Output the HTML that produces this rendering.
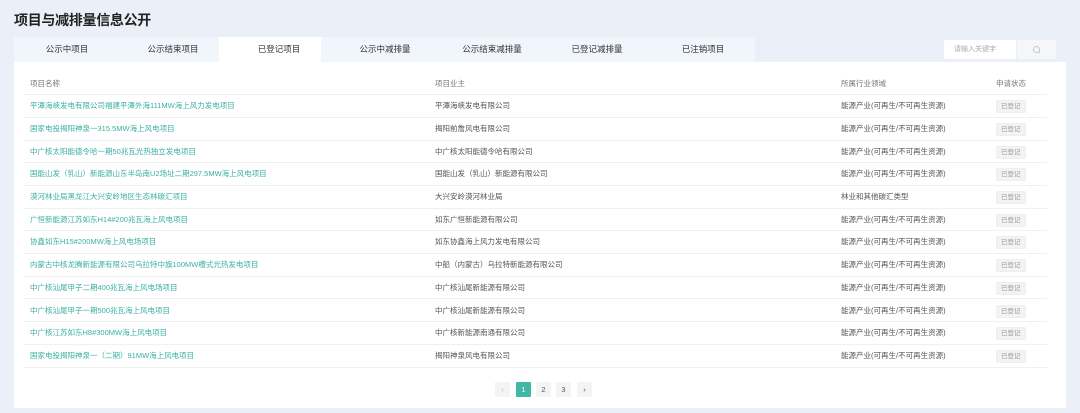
<!DOCTYPE html>
<html><head><meta charset="utf-8"><style>
*{margin:0;padding:0;box-sizing:border-box}
body{width:1080px;height:413px;background:#ebeff7;font-family:"Liberation Sans","Noto Sans CJK SC",sans-serif;position:relative;overflow:hidden;color:#555}
.title{position:absolute;left:14px;top:10px;font-size:14px;font-weight:bold;color:#222;letter-spacing:-0.3px}
.tabs{position:absolute;left:14px;top:37px;width:741px;height:25px;background:#f1f5fc}
.tab{position:absolute;top:0;height:25px;line-height:25px;font-size:8.5px;color:#333;transform:translateX(-50%);white-space:nowrap}
.act{position:absolute;left:205px;top:0;width:102px;height:25px;background:#fff}
.search{position:absolute;left:944px;top:40px;width:112px;height:19px;background:#fff;border-radius:2px}
.search span{position:absolute;left:10px;top:0;line-height:19px;font-size:7px;color:#aaa}
.search .btn{position:absolute;left:72px;top:0;width:40px;height:19px;background:#f4f6f9;border-left:1px solid #eee}
.panel{position:absolute;left:14px;top:62px;width:1052px;height:346px;background:#fff}
.row{position:absolute;left:10px;width:1023px;height:22.7px;border-bottom:1px solid #eef0f3;font-size:7.5px;line-height:22.7px;white-space:nowrap}
.row div{position:absolute;top:0}
.c1{left:6px;color:#3ab0a0}.c2{left:411px;color:#555}.c3{left:817px;color:#555}.c4{left:972px}
.hd div{color:#777}.hd .c1{color:#777}
.badge{display:inline-block;background:#f2f3f5;color:#999;font-size:6.5px;line-height:11px;padding:0 4px;border-radius:2px;border:1px solid #eceef0}
.pg{position:absolute;top:382px;width:15px;height:15px;background:#f3f4f6;font-size:7.5px;line-height:15px;text-align:center;color:#555;border-radius:1px}
.pg.on{background:#40b8a8;color:#fff}
</style></head><body>
<div class="title">项目与减排量信息公开</div>
<div class="tabs">
<div class="act"></div>
<div class="tab" style="left:53px">公示中项目</div>
<div class="tab" style="left:159px">公示结束项目</div>
<div class="tab" style="left:265px">已登记项目</div>
<div class="tab" style="left:371px">公示中减排量</div>
<div class="tab" style="left:478px">公示结束减排量</div>
<div class="tab" style="left:583px">已登记减排量</div>
<div class="tab" style="left:689px">已注销项目</div>
</div>
<div class="search"><span>请输入关键字</span><div class="btn"><svg width="40" height="19"><circle cx="19.5" cy="9.5" r="3" fill="none" stroke="#bbb" stroke-width="0.8"/><line x1="21.7" y1="11.7" x2="23" y2="13" stroke="#bbb" stroke-width="0.8"/></svg></div></div>
<div class="panel">
<div class="row hd" style="top:10.5px"><div class="c1">项目名称</div><div class="c2">项目业主</div><div class="c3">所属行业领域</div><div class="c4">申请状态</div></div>
<div class="row" style="top:33.2px"><div class="c1">平潭海峡发电有限公司福建平潭外海111MW海上风力发电项目</div><div class="c2">平潭海峡发电有限公司</div><div class="c3">能源产业(可再生/不可再生资源)</div><div class="c4"><span class="badge">已登记</span></div></div>
<div class="row" style="top:55.9px"><div class="c1">国家电投揭阳神泉一315.5MW海上风电项目</div><div class="c2">揭阳前詹风电有限公司</div><div class="c3">能源产业(可再生/不可再生资源)</div><div class="c4"><span class="badge">已登记</span></div></div>
<div class="row" style="top:78.6px"><div class="c1">中广核太阳能德令哈一期50兆瓦光热独立发电项目</div><div class="c2">中广核太阳能德令哈有限公司</div><div class="c3">能源产业(可再生/不可再生资源)</div><div class="c4"><span class="badge">已登记</span></div></div>
<div class="row" style="top:101.3px"><div class="c1">国能山发（乳山）新能源山东半岛南U2场址二期297.5MW海上风电项目</div><div class="c2">国能山发（乳山）新能源有限公司</div><div class="c3">能源产业(可再生/不可再生资源)</div><div class="c4"><span class="badge">已登记</span></div></div>
<div class="row" style="top:124px"><div class="c1">漠河林业局黑龙江大兴安岭地区生态林碳汇项目</div><div class="c2">大兴安岭漠河林业局</div><div class="c3">林业和其他碳汇类型</div><div class="c4"><span class="badge">已登记</span></div></div>
<div class="row" style="top:146.7px"><div class="c1">广恒新能源江苏如东H14#200兆瓦海上风电项目</div><div class="c2">如东广恒新能源有限公司</div><div class="c3">能源产业(可再生/不可再生资源)</div><div class="c4"><span class="badge">已登记</span></div></div>
<div class="row" style="top:169.4px"><div class="c1">协鑫如东H15#200MW海上风电场项目</div><div class="c2">如东协鑫海上风力发电有限公司</div><div class="c3">能源产业(可再生/不可再生资源)</div><div class="c4"><span class="badge">已登记</span></div></div>
<div class="row" style="top:192.1px"><div class="c1">内蒙古中核龙腾新能源有限公司乌拉特中旗100MW槽式光热发电项目</div><div class="c2">中船（内蒙古）乌拉特新能源有限公司</div><div class="c3">能源产业(可再生/不可再生资源)</div><div class="c4"><span class="badge">已登记</span></div></div>
<div class="row" style="top:214.8px"><div class="c1">中广核汕尾甲子二期400兆瓦海上风电场项目</div><div class="c2">中广核汕尾新能源有限公司</div><div class="c3">能源产业(可再生/不可再生资源)</div><div class="c4"><span class="badge">已登记</span></div></div>
<div class="row" style="top:237.5px"><div class="c1">中广核汕尾甲子一期500兆瓦海上风电项目</div><div class="c2">中广核汕尾新能源有限公司</div><div class="c3">能源产业(可再生/不可再生资源)</div><div class="c4"><span class="badge">已登记</span></div></div>
<div class="row" style="top:260.2px"><div class="c1">中广核江苏如东H8#300MW海上风电项目</div><div class="c2">中广核新能源南通有限公司</div><div class="c3">能源产业(可再生/不可再生资源)</div><div class="c4"><span class="badge">已登记</span></div></div>
<div class="row" style="top:282.9px"><div class="c1">国家电投揭阳神泉一（二期）91MW海上风电项目</div><div class="c2">揭阳神泉风电有限公司</div><div class="c3">能源产业(可再生/不可再生资源)</div><div class="c4"><span class="badge">已登记</span></div></div>
</div>
<div class="pg" style="left:495px;color:#bbb">‹</div>
<div class="pg on" style="left:516px">1</div>
<div class="pg" style="left:536px">2</div>
<div class="pg" style="left:556px">3</div>
<div class="pg" style="left:577px">›</div>
</body></html>
